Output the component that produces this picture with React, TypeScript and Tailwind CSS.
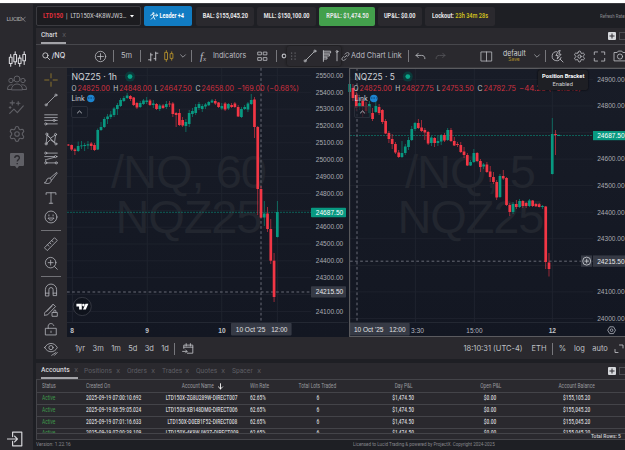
import type { ReactNode } from "react";
import clsx from "clsx";
import { Settings } from "lucide-react";

type Candle = [open: number, close: number, high: number, low: number];

// open / close / high / low, as y positions on the pane. close above open (smaller y) is an up bar
const hourly: Candle[] = [
  [144.6, 145.4, 144, 146], [144.6, 145.4, 144, 146], [145, 149.5, 144.5, 151], [149.5, 151, 148, 155],
  [151, 146, 141.5, 152], [146.3, 145.5, 141, 149], [146, 145, 143, 151], [145.5, 144.3, 141, 149],
  [143.5, 146, 142, 150], [145, 150, 143, 151], [149.5, 130, 128.5, 150], [130, 127, 122, 131],
  [127, 119, 117, 128], [119, 116.5, 114, 124], [117, 114.5, 111, 119], [115, 108.5, 107, 117],
  [109, 105, 103, 115], [106, 100, 98, 107], [101, 98, 96, 102], [98, 95.5, 93, 99],
  [96, 99, 95, 101], [97.5, 105, 97, 106], [103, 107.5, 102, 109], [107, 103, 101, 108],
  [104, 100.5, 99, 105], [102, 100.5, 97, 104], [100.5, 105, 99, 106], [105, 103.5, 100, 108],
  [104, 109, 103, 110], [109, 105.5, 104, 111], [105.5, 108, 104, 109], [107, 104, 101, 109],
  [103.6, 104.4, 101, 107], [103.5, 114, 102, 117], [113, 115, 112, 127], [113, 125, 109, 126],
  [120, 125.5, 117, 127], [126, 122, 119, 132], [124, 113, 110, 127], [114, 111, 108, 117],
  [113, 107, 104, 115], [108, 104, 102, 110], [109, 106, 104, 112], [106.5, 104.5, 103, 109],
  [105.3, 102, 101, 106], [102.5, 100.5, 99, 103], [101, 103.5, 99, 105], [102.5, 107, 102, 108],
  [108.5, 106, 103, 110], [103.5, 109.5, 102, 111], [108.5, 104, 103, 110], [105, 107, 103, 108],
  [103.5, 107, 102, 108], [107, 116.5, 105, 117], [117, 109, 107, 118], [109, 107, 105, 110],
  [109.5, 103.5, 102, 112], [104, 100, 94, 105], [99.5, 127, 97, 138], [127, 189, 126, 215],
  [189, 217.5, 186, 218], [217.5, 213.5, 201, 226], [213.5, 229, 207, 232], [229, 260.7, 219, 264],
  [260.7, 297, 253, 302], [237, 212, 201, 237.5],
];

const fiveMin: Candle[] = [
  [92, 84, 77, 96], [88, 98, 84, 101], [95, 108, 92, 111], [106, 103, 98, 110], [101, 107, 99, 117],
  [106, 111, 102, 114], [113, 104, 101, 117], [113, 119, 108, 121], [112, 106, 101, 113], [107, 113, 104, 115],
  [110, 122, 109, 124], [121, 133.5, 119, 134], [133, 139, 131, 143], [139, 144, 134, 149], [144, 152.5, 142, 154],
  [152.5, 157, 150, 158], [157, 153, 141, 158], [153, 146.5, 144, 155], [147, 140, 137, 150],
  [140, 129, 126, 141], [129, 123, 122, 131], [123, 128, 119, 129], [127.5, 131, 120, 132], [130, 132.5, 128, 140],
  [132, 143.5, 131, 145], [143, 137.5, 136, 146], [138, 143, 137, 147], [143, 141, 136, 146], [141.5, 135, 134, 145],
  [135, 140.5, 133, 142], [140, 130, 128, 141], [130, 141, 128, 142], [141, 145.5, 137, 146],
  [144, 145, 142, 147], [145, 152, 142, 153], [151.5, 155, 147, 158], [155, 165.5, 153, 166], [165.5, 162, 160, 166],
  [162, 153, 149, 163], [153, 161, 152, 162], [161, 167, 159, 172], [166.5, 164.5, 163, 169], [164.5, 172, 162, 173],
  [171.5, 177, 166, 182], [177, 182, 172, 184], [182, 197.5, 180, 200], [197, 176, 174, 198], [176, 178.5, 170, 180],
  [178, 205, 177, 206], [205, 212, 203, 216], [212, 204, 202, 214], [204, 207, 200, 209], [207, 201, 199, 208],
  [201, 206, 200, 208], [203, 206, 202, 208], [206, 200.5, 199, 207], [200.5, 206, 200, 207], [204, 206.3, 203, 207],
  [204.2, 207, 203, 207.5], [207, 206, 205, 209], [206.5, 262, 206, 269], [262.5, 269, 253, 276.5],
  [174, 134, 118, 174.5], [134, 135, 130, 155],
];

const UP = "#089981";
const DOWN = "#f23645";

function Candles({ data, x0, step }: { data: Candle[]; x0: number; step: number }) {
  return (
    <g>
      {data.map(([open, close, high, low], i) => {
        const x = x0 + i * step;
        const color = close < open ? UP : DOWN;
        return (
          <g key={i}>
            <rect x={x - 0.4} y={high} width={0.8} height={low - high} fill={color} opacity={0.75} />
            <rect x={x - 1.35} y={Math.min(open, close)} width={2.7} height={Math.max(0.8, Math.abs(close - open))} fill={color} />
          </g>
        );
      })}
    </g>
  );
}

type LabelProps = { x: number; y: number; w?: number; size?: number; fill?: string; weight?: number; children: ReactNode };

function Label({ x, y, w, size = 6.6, fill = "#a9abb1", weight = 400, children }: LabelProps) {
  return (
    <text x={x} y={y} textLength={w} lengthAdjust="spacingAndGlyphs" fontSize={size} fill={fill} fontWeight={weight}>
      {children}
    </text>
  );
}

const legendFont = "font-[Inter,sans-serif]";

function Ohlc({ x, values, change }: { x: number; values: string[]; change: string }) {
  const starts = [0, 41.7, 83.3, 124];
  return (
    <g className={legendFont}>
      {["O", "H", "L", "C"].map((k, i) => (
        <g key={k}>
          <Label x={x + starts[i]} y={90.7} w={k === "L" ? 3.6 : 5} size={7} fill="#c5c7cc">{k}</Label>
          <Label x={x + starts[i] + (k === "L" ? 4.6 : 6)} y={90.7} w={32.5} size={7.2} fill="#d0303f">{values[i]}</Label>
        </g>
      ))}
      <Label x={x + 165.5} y={90.7} w={62} size={7.2} fill="#d0303f">{change}</Label>
    </g>
  );
}

function Legend({ x, symbol, w }: { x: number; symbol: string; w: number }) {
  return (
    <g className={legendFont}>
      <Label x={x} y={79.9} w={w} size={8.8} fill="#d1d3d8">{symbol}</Label>
      <circle cx={x + w + 13} cy={76.6} r={5} fill="#0b3a3a" />
      <circle cx={x + w + 13} cy={76.6} r={2.4} fill="#0aa588" />
      <Label x={x} y={101.4} w={13.3} size={7.2} fill="#d1d3d8">Link</Label>
      <circle cx={x + 19.3} cy={98.5} r={3.8} fill="#1c84cf" />
      <path d={`M${x + 16.3} 98h6`} stroke="#0f3e70" strokeWidth={1.2} strokeDasharray="1.6 1" />
      <rect x={x} y={106.5} width={16} height={11} rx={1.5} fill="#171b26" fillOpacity={0.7} stroke="#2e323d" strokeWidth={0.8} />
      <path d={`M${x + 5.7} 113.2l2.3-2.2 2.3 2.2`} fill="none" stroke="#c9cbd0" strokeWidth={0.9} />
    </g>
  );
}

function TimeBadge({ x, w }: { x: number; w: number }) {
  return (
    <g>
      <rect x={x} y={323} width={w} height={12.4} rx={0.8} fill="#363a45" />
      <Label x={x + w - 55.8} y={332.3} w={29.5} fill="#e0e1e4">10 Oct '25</Label>
      <Label x={x + w - 20.4} y={332.3} w={16.2} fill="#e0e1e4">12:00</Label>
    </g>
  );
}

const paneFont = "font-['Liberation_Sans',Arial,sans-serif]";

function HourlyChart() {
  const ticks = Array.from({ length: 15 }, (_, i) => 25500 - i * 100);
  return (
    <svg viewBox="67 68 281 269" className={clsx("block h-[269px] w-[281px] shrink-0", paneFont)}>
      <defs>
        <linearGradient id="pane" x1="0" y1="0" x2="0" y2="1">
          <stop offset="0" stopColor="#181c27" />
          <stop offset="1" stopColor="#131722" />
        </linearGradient>
      </defs>
      <rect x={67} y={68} width={281} height={269} fill="url(#pane)" />
      {[72.3, 147.2, 221.8, 277.3].map((x) => (
        <rect key={x} x={x - 0.4} y={68} width={0.8} height={254} fill="#222631" />
      ))}
      {ticks.map((t, i) => (
        <rect key={t} x={67} y={75 + i * 16.86} width={244} height={0.8} fill="#20242f" />
      ))}
      <rect x={67} y={322} width={281} height={0.8} fill="#292d38" />
      <text x={111} y={187.6} fontSize={47} textLength={156} fill="#22262f">/NQ, 60</text>
      <text x={115.5} y={232.5} fontSize={47} textLength={147} fill="#22262f">NQZ25</text>
      <path d="M67 212.3H311" stroke="#0a7d6d" strokeWidth={0.7} strokeDasharray="2 1" />
      <path d="M261 68V322M67 292H311" fill="none" stroke="#686b76" strokeWidth={1} strokeDasharray="2.7 2.4" />
      <Candles data={hourly} x0={65.1} step={3.265} />
      {ticks.filter((t) => t !== 24700 && t !== 24200).map((t) => (
        <Label key={t} x={315.8} y={77.7 + ((25500 - t) / 100) * 16.86} w={27.4}>{`${t}.00`}</Label>
      ))}
      <rect x={311} y={207.7} width={35} height={9.6} rx={0.8} fill={UP} />
      <Label x={315.8} y={214.8} w={27.4} fill="#ffffff">24687.50</Label>
      <rect x={311} y={286.2} width={35} height={11.4} rx={0.8} fill="#363a45" />
      <Label x={315.8} y={294.3} w={27.4} fill="#e8e9ec">24215.50</Label>
      <Legend x={71.5} symbol="NQZ25 · 1h" w={45.5} />
      <Ohlc x={71.5} values={["24825.00", "24848.00", "24647.50", "24658.00"]} change="−169.00 (−0.68%)" />
      <Label x={70.2} y={332.8} fill="#c0c2c8" weight={700}>8</Label>
      <Label x={145.2} y={332.8} fill="#c0c2c8" weight={700}>9</Label>
      <Label x={218.3} y={332.8} fill="#c0c2c8" weight={700}>10</Label>
      <TimeBadge x={231} w={60.6} />
      {/* vendor mark */}
      <circle cx={82.2} cy={306.5} r={9.1} fill="#0f131c" stroke="#3c3f49" strokeWidth={0.8} />
      <path d="M76.4 303.8h5.4v5.8h-2.7v-3.1h-2.7zM85.5 303.8h2.9l-2.6 5.8h-2.8z" fill="#fff" />
      <circle cx={83.4} cy={305.1} r={1.3} fill="#fff" />
    </svg>
  );
}

function FiveMinChart() {
  const ticks = Array.from({ length: 10 }, (_, i) => 24900 - i * 100);
  return (
    <svg viewBox="348 68 277 269" className={clsx("block h-[269px] w-[277px] shrink-0", paneFont)}>
      <rect x={348} y={68} width={277} height={269} fill="url(#pane)" />
      {[415.3, 474.3, 552.3].map((x) => (
        <rect key={x} x={x - 0.4} y={68} width={0.8} height={254} fill="#222631" />
      ))}
      {ticks.map((t, i) => (
        <rect key={t} x={350} y={79 + i * 26.56} width={243} height={0.8} fill="#20242f" />
      ))}
      <rect x={350} y={322} width={275} height={0.8} fill="#292d38" />
      <text x={405} y={187.6} fontSize={47} textLength={131} fill="#22262f">/NQ, 5</text>
      <text x={397.5} y={232.5} fontSize={47} textLength={147} fill="#22262f">NQZ25</text>
      <path d="M350 135.5H593" stroke="#0a7d6d" strokeWidth={0.7} strokeDasharray="2 1" />
      <path d="M357 68V322M350 261.2H593" fill="none" stroke="#686b76" strokeWidth={1} strokeDasharray="2.7 2.4" />
      <Candles data={fiveMin} x0={349.7} step={3.267} />
      <path d="M557 135.4h3" stroke={UP} strokeWidth={1.2} />
      {ticks.filter((t) => t !== 24700 && t !== 24200).map((t) => (
        <Label key={t} x={597.2} y={81.8 + ((24900 - t) / 100) * 26.56} w={27.4}>{`${t}.00`}</Label>
      ))}
      <rect x={593} y={131} width={32} height={9.2} fill={UP} />
      <Label x={597.2} y={138} w={27.4} fill="#ffffff">24687.50</Label>
      <rect x={581} y={255.4} width={11} height={11.4} fill="#363a45" />
      <rect x={593} y={255.4} width={32} height={11.4} fill="#363a45" />
      <circle cx={586.7} cy={261.1} r={4} fill="none" stroke="#d1d3d8" strokeWidth={0.8} />
      <path d="M584.5 261.1h4.4M586.7 258.9v4.4" stroke="#d1d3d8" strokeWidth={0.8} />
      <Label x={597.2} y={263.5} w={27.4} fill="#e8e9ec">24215.50</Label>
      <Legend x={354.5} symbol="NQZ25 · 5" w={40.3} />
      <Ohlc x={353.5} values={["24825.00", "24827.75", "24753.50", "24782.75"]} change="−44.25 (−0.18%)" />
      <Label x={411} y={332.8} w={13} fill="#b2b5be">3:30</Label>
      <TimeBadge x={349.5} w={60.2} />
      <Label x={466.3} y={332.8} w={16.2} fill="#b2b5be">15:00</Label>
      <Label x={548.7} y={332.8} fill="#c0c2c8" weight={700}>12</Label>
      <path d="M609.7 326.8h3.8l2 3.4-2 3.4h-3.8l-2-3.4z" fill="none" stroke="#b2b5be" strokeWidth={0.8} />
      <circle cx={611.6} cy={330.2} r={1.3} fill="none" stroke="#b2b5be" strokeWidth={0.8} />
      {/* active pane frame */}
      <path d="M625 68.4H349.6V336.5H625" fill="none" stroke="#5b5b5f" strokeWidth={1.1} />
    </svg>
  );
}

type IconProps = { children: ReactNode; className?: string; width?: number };

// Stroke icon on a 20x20 grid
function Icon({ children, className = "size-[14px] text-[#b9bac0]", width = 1.2 }: IconProps) {
  return (
    <svg viewBox="0 0 20 20" fill="none" stroke="currentColor" strokeWidth={width} strokeLinecap="round" strokeLinejoin="round" className={clsx("shrink-0", className)}>
      {children}
    </svg>
  );
}

function Slot({ className, children }: { className: string; children?: ReactNode }) {
  return <div className={clsx("flex h-full shrink-0 items-center justify-center whitespace-nowrap", className)}>{children}</div>;
}

const Rule = () => <div className="h-[12px] w-px shrink-0 bg-[#77777c]" />;

const Chevron = () => (
  <Icon className="size-[8px] text-[#a5a6ab]" width={2}><path d="M4 7l6 6 6-6" /></Icon>
);

function Sidebar() {
  return (
    <aside className="flex w-[33px] shrink-0 flex-col items-center bg-[#2a292e] text-[#606066]">
      <div className="mt-[9px] flex h-[12px] items-center text-[6px] leading-none tracking-tighter text-[#b3b3b8]">
        LUCID
        <svg viewBox="0 0 8 8" className="-ml-px h-[8px] w-[6px]" fill="none" stroke="currentColor" strokeWidth="0.8"><path d="M1 1l6 6.5M7.5 1L2 6.5" /></svg>
      </div>
      <Icon className="mt-[25px] h-[18px] w-[18px] text-[#d8d8dc]" width={1.2}>
        <path d="M3 5v3M3 15v3M1.5 8h3v7h-3zM8 2v3M8 13v3M6.5 5h3v8h-3zM13 6v3M13 15v3M11.5 9h3v6h-3zM18 2v3M18 12v4M16.5 5h3v7h-3z" />
      </Icon>
      <Icon className="mt-[5px] size-[20px]" width={1}>
        <circle cx="10" cy="6" r="3" /><circle cx="4" cy="7.5" r="2.2" /><circle cx="16" cy="7.5" r="2.2" />
        <path d="M4.5 16.5c0-7.5 11-7.5 11 0zM4.5 16.5h-4c0-3.5 1.5-5 4.8-4.7M15.5 16.5h4c0-3.5-1.5-5-4.8-4.7" />
      </Icon>
      <Icon className="mt-[6px] size-[17px]" width={1.3}>
        <path d="M2 17l5-5 4 4 7-8M5 2v5M2.5 4.5h5M12 3v4M10 5h4M2.5 9v2M1.5 10h2" />
      </Icon>
      <Settings className="mt-[9px] size-[18px]" strokeWidth={1.5} />
      <svg viewBox="0 0 14 16" className="mt-[10px] h-[16px] w-[14px]">
        <path d="M1 0h12a1 1 0 0 1 1 1v11a1 1 0 0 1-1 1H9l-2 2.5L5 13H1a1 1 0 0 1-1-1V1a1 1 0 0 1 1-1z" fill="#606066" />
        <path d="M4.8 5c0-3 4.6-3 4.6 0 0 1.7-2.2 1.6-2.2 3.5M7.2 10v1.2" fill="none" stroke="#2a292e" strokeWidth="1.3" />
      </svg>
      <Icon className="mt-auto mb-[3px] ml-[-3px] size-[16px] text-[#d5d5d9]" width={1.5}>
        <path d="M7 7V1.5h11.5v17H7V13M.5 10H13M9.5 6.5L13 10l-3.5 3.5" />
      </Icon>
    </aside>
  );
}

function Stat({ className, children }: { className: string; children: ReactNode }) {
  return (
    <div className={clsx("flex h-[19px] shrink-0 items-center justify-center rounded-[2px] text-[7px] font-bold whitespace-nowrap text-[#e6e6e8]", className)}>
      <span className="scale-x-[.8]">{children}</span>
    </div>
  );
}

function TopBar() {
  return (
    <header className="flex h-[24px] shrink-0 items-center bg-[#1e1f24]">
      <div className="mr-[3px] flex h-[20px] w-[105px] shrink-0 items-center rounded-[2px] border border-[#3b3b40] bg-[#1c1c20] pl-[6px] text-[7px] whitespace-nowrap text-[#d2d2d5]">
        <span className="w-[86px] origin-left scale-x-[.84]"><b className="text-[#e02f3c]">LTD150</b>&nbsp; | &nbsp;LTD150X-4K8WJW3…</span>
        <svg viewBox="0 0 4 3" className="ml-px h-[3px] w-[4px] fill-white"><path d="M0 0h4L2 2.5z" /></svg>
      </div>
      <div className="mr-[4px] flex h-[20px] w-[48px] shrink-0 items-center rounded-[2px] bg-[#117cc3] pl-[6px] text-[7px] font-bold text-white">
        <Icon className="size-[8px]" width={2.2}>
          <circle cx="8" cy="3" r="1.5" /><path d="M2 8l5-2 3 4-3 4-4 4M9 12l3 6M10 8h9M16 5l3 3-3 3" />
        </Icon>
        <span className="origin-left scale-x-[.78] pl-[2px] whitespace-nowrap">Leader +4</span>
      </div>
      <Stat className="mr-[3px] w-[58px] bg-[#2a292e]">BAL: $155,045.20</Stat>
      <Stat className="mr-[3px] w-[59px] bg-[#2a292e]">MLL: $150,100.00</Stat>
      <Stat className="mr-[3px] w-[56px] bg-[#43a04c]">RP&amp;L: $1,474.50</Stat>
      <Stat className="mr-[3px] w-[44px] bg-[#2a292e]">UP&amp;L: $0.00</Stat>
      <Stat className="w-[70px] bg-[#2a292e]">Lockout: <span className="font-medium text-[#d9c81c]">23h 34m 28s</span></Stat>
      <span className="ml-auto w-[25px] origin-left scale-x-[.86] text-[5px] whitespace-nowrap text-[#8b8b90]">Refresh Rate:</span>
    </header>
  );
}

function PanelButtons() {
  return (
    <div className="ml-auto flex shrink-0 gap-[3px]">
      <div className="flex size-[8px] items-center justify-center rounded-[1px] bg-[#d6d8dc]">
        <svg viewBox="0 0 6 6" className="size-[6px]" stroke="#2a292e"><path d="M3 .5v5M.5 3h5" /></svg>
      </div>
      <div className="h-[8px] w-[6px] border border-r-0 border-[#4d4d52]" />
    </div>
  );
}

function ChartToolbar() {
  return (
    <div className="flex h-[23px] shrink-0 items-center overflow-hidden border-t border-[#47474c] bg-[#2a292e] font-[Inter,sans-serif] text-[7.5px] text-[#bcbdc2]">
      <Slot className="w-[31px] gap-[2px] pl-[4px] text-[7.2px] text-[#dedfe2]">
        <Icon className="size-[8px]" width={2}><circle cx="8.5" cy="8.5" r="6.5" /><path d="M13.5 13.5L19 19" /></Icon>
        <span className="font-medium">/NQ</span>
      </Slot>
      <Slot className="ml-[26px] w-[14px]">
        <Icon className="size-[13px]"><circle cx="10" cy="10" r="8" /><path d="M10 5.5v9M5.5 10h9" /></Icon>
      </Slot>
      <Slot className="w-[12px]"><Rule /></Slot>
      <Slot className="w-[15px]">5m</Slot>
      <Slot className="w-[12px]"><Rule /></Slot>
      <Slot className="w-[14px]">
        <Icon className="size-[11px]" width={1.7}><path d="M5 4v14M5 16H1M5 7h3M14 2v15M14 14h-3M14 4h4" /></Icon>
      </Slot>
      <Slot className="w-[18px]">
        <Icon className="size-[12px] text-[#a8882c]" width={1.6}><path d="M3.5 4h4v12h-4zM5.5 1v3M5.5 16v3M12.5 6h4v8h-4zM14.5 3v3M14.5 14v3" /></Icon>
      </Slot>
      <Slot className="w-[10px]"><Chevron /></Slot>
      <Slot className="w-[6px]"><Rule /></Slot>
      <Slot className="w-[18px]"><span className="font-['Liberation_Serif',serif] text-[11px] italic">f<sub className="text-[7px]">x</sub></span></Slot>
      <Slot className="w-[36px]"><span className="scale-x-[.95]">Indicators</span></Slot>
      <Slot className="w-[28px]">
        <Icon className="size-[11px]" width={1.5}><path d="M2 2h6v5H2zM12 2h6v5h-6zM2 12h6v5H2zM12 12h6v5h-6z" /></Icon>
      </Slot>
      <Slot className="-ml-[4px] w-[8px]"><Rule /></Slot>
      <Slot className="w-[7px]"><Icon className="size-[6px]" width={4}><circle cx="10" cy="10" r="6" /></Icon></Slot>
      <div className="flex h-[20px] w-[54px] shrink-0 items-center rounded-[2px] bg-[#2a292e] shadow-[0_0_3px_#111]">
        <Slot className="w-[12px]">
          <svg viewBox="0 0 5 8" className="h-[8px] w-[5px] fill-[#67676c]">
            {[0.5, 3.5, 6.5].map((y) => <g key={y}><rect x="0" y={y} width="1.2" height="1.2" /><rect x="3.5" y={y} width="1.2" height="1.2" /></g>)}
          </svg>
        </Slot>
        <Slot className="w-[21px]"><Icon className="size-[14px]"><path d="M4 16L16 4" /><circle cx="3" cy="17" r="1.5" /><circle cx="17" cy="3" r="1.5" /></Icon></Slot>
        <Slot className="w-[13px]"><Icon className="size-[12px]" width={1.5}><path d="M4 1v18M4 2h12v3H4M4 7h10v3H4M4 12h6v3H4" /></Icon></Slot>
        <Slot className="w-[8px]"><Icon className="size-[12px]" width={1.5}><path d="M10 4v14" /><circle cx="10" cy="2.5" r="1.5" /></Icon></Slot>
      </div>
      <Slot className="-ml-px w-[10px]">
        <Icon className="size-[9px]" width={1.7}><path d="M8 12L13 7M9 5l3-3a3.5 3.5 0 0 1 5 5l-3 3M11 15l-3 3a3.5 3.5 0 0 1-5-5l3-3" /></Icon>
      </Slot>
      <Slot className="ml-px w-[51px]"><span className="scale-x-[.96]">Add Chart Link</span></Slot>
      <Slot className="w-[12px]"><Rule /></Slot>
      <Slot className="w-[13px]"><Icon className="size-[11px]" width={1.5}><path d="M6 4L2 8l4 4M2 8h10c4 0 6 2 6 6" /></Icon></Slot>
      <Slot className="ml-[7px] w-[13px]"><Icon className="size-[11px] text-[#56565b]" width={1.5}><path d="M14 4l4 4-4 4M18 8H8c-4 0-6 2-6 6" /></Icon></Slot>
      <Slot className="ml-[32px] w-[14px]"><Icon className="size-[13px]"><path d="M2 3h16v14H2zM10 3v14" /></Icon></Slot>
      <div className="ml-[7px] flex w-[28px] shrink-0 flex-col items-center leading-none">
        <span className="scale-x-[.92] text-[7.5px] text-[#cfd0d4]">default</span>
        <span className="text-[5px] text-[#b08f2c]">Save</span>
      </div>
      <Slot className="ml-[4px] w-[10px]"><Chevron /></Slot>
      <Slot className="w-[7px]"><Rule /></Slot>
      <Slot className="w-[17px]">
        <Icon className="size-[13px]" width={1.3}><path d="M9 2.5a7 7 0 1 0 6.5 9M14 14l4.5 4.5M12 1L7.500 8.500h3.500L9.500 14l6-7.500H12L14 1z" /></Icon>
      </Slot>
      <Slot className="w-[26px]"><Settings className="size-[13px] text-[#b9bac0]" strokeWidth={1.7} /></Slot>
      <Slot className="w-[15px]"><Icon className="size-[13px]" width={1.3}><path d="M2 7V3h5M13 3h5v4M18 13v4h-5M7 17H2v-4" /></Icon></Slot>
      <Slot className="ml-[5px] w-[15px]"><Icon className="size-[14px]"><path d="M2 5h4l1.5-2h5L14 5h4v12H2z" /><circle cx="10" cy="10.8" r="3.7" /></Icon></Slot>
    </div>
  );
}

const drawTools: ReactNode[] = [
  <g key="cross" stroke="#a8882c"><path d="M10 1v6M10 13v6M1 10h6M13 10h6" /></g>,
  <g key="trend"><path d="M4 16L16 4" /><circle cx="3" cy="17" r="1.5" /><circle cx="17" cy="3" r="1.5" /></g>,
  <g key="lines"><path d="M1 4h18M1 8h18M1 12h12M16 12h3M4 17h15" /><circle cx="14.5" cy="12" r="1.5" /><circle cx="2.5" cy="17" r="1.5" /></g>,
  <g key="xabcd"><path d="M3 16L4.5 4 15 15 16.5 4.5M5 5l4 4 6-4M4 16l5-5 7 5" /><circle cx="3" cy="17" r="1.5" /><circle cx="4" cy="3" r="1.5" /><circle cx="16.5" cy="3.5" r="1.5" /><circle cx="17" cy="17" r="1.5" /></g>,
  <g key="forecast"><path d="M4 3h15M1 8h14M18 8h1M4 12l11-3M4 17h12M2.5 12v3" /><circle cx="2.5" cy="3" r="1.5" /><circle cx="16.5" cy="8" r="1.5" /><circle cx="2.5" cy="17" r="1.5" /><circle cx="17.5" cy="17" r="1.5" /></g>,
  <g key="brush"><path d="M1 17c4-1 1-6 6-7 3 0 4 3 3 5-2 4-7 3-9 2zM9 10l9-8M11 13l8-10" /></g>,
  <g key="text"><path d="M3 5V2.5h14V5M10 2.5v15M7.5 17.5h5" /></g>,
  <g key="smile"><circle cx="10" cy="10" r="8.5" /><path d="M7 7v1.5M13 7v1.5M6 12c2 3.5 6 3.5 8 0z" /></g>,
];

const measureTools: ReactNode[] = [
  <g key="ruler"><path d="M1 15L15 1l4 4L5 19zM5 11l2 2M8 8l2 2M11 5l2 2" /></g>,
  <g key="zoom"><circle cx="9.5" cy="9.5" r="7.5" /><path d="M15 15l4 4M9.5 6v7M6 9.5h7" /></g>,
];

const lockTools: ReactNode[] = [
  <g key="magnet"><path d="M2 18V9.5a8 8 0 0 1 16 0V18h-5V9.5a3 3 0 0 0-6 0V18zM2 14.5h5M13 14.5h5" /></g>,
  <g key="draw"><path d="M1 14L13 1.500l3.500 3.500L5 17l-4.500.5zM4 12l8-8M12 13.500h7v5.500h-7zM14 13.500v-2c0-2 3-2 3 0v2" /></g>,
  <g key="lock"><path d="M2.5 9h15v9.500h-15zM6 9V6c0-5 7-5 8-1M10 13v2" /></g>,
  <g key="eye"><path d="M1 8c4-8 14-8 18 0-4 8-14 8-18 0zM11 19l6-4M15 19l4-4" /><circle cx="10" cy="8" r="3" /></g>,
];

function ToolGroup({ icons, className }: { icons: ReactNode[]; className: string }) {
  return (
    <div className={clsx("flex flex-col items-center", className)}>
      {icons.map((icon, i) => <Icon key={i} width={1.1}>{icon}</Icon>)}
    </div>
  );
}

function DrawingTools() {
  return (
    <div className="flex w-[31px] shrink-0 flex-col items-center bg-[#2a292e] pt-[5px] pr-[2px]">
      <ToolGroup icons={drawTools} className="gap-[5.6px]" />
      <div className="mt-[6px] h-px w-[20px] shrink-0 bg-[#717176]" />
      <ToolGroup icons={measureTools} className="mt-[6px] gap-[5px]" />
      <div className="mt-[6px] h-px w-[20px] shrink-0 bg-[#717176]" />
      <ToolGroup icons={lockTools} className="mt-[6px] gap-[5.6px]" />
    </div>
  );
}

function RangeBar() {
  return (
    <div className="flex h-[22px] items-center overflow-hidden bg-[#2a292e] pt-px font-[Inter,sans-serif] text-[7.5px] text-[#bfc0c5]">
      <div className="ml-[8px] flex w-[94px] justify-between">
        {["1yr", "3m", "1m", "5d", "3d", "1d"].map((r) => <span key={r}>{r}</span>)}
      </div>
      <Slot className="ml-[3px] w-[5px]"><Rule /></Slot>
      <Slot className="ml-[3px] w-[15px]"><Icon className="size-[12px]" width={1.4}><path d="M3 9V3.5h15V17H9M3 7h15M7 1v4M14 1v4M1 14h7M6 11.5L8.500 14 6 16.5" /></Icon></Slot>
      <Slot className="ml-auto w-[64px]">18:10:31 (UTC-4)</Slot>
      <Slot className="ml-[5px] w-[18px]">ETH</Slot>
      <Slot className="ml-px w-[7px]"><Rule /></Slot>
      <Slot className="ml-px w-[11px]">%</Slot>
      <Slot className="ml-[4px] w-[15px]">log</Slot>
      <Slot className="ml-[4px] w-[18px]">auto</Slot>
      <Slot className="ml-[3px] w-[13px]"><Icon className="size-[10px]" width={1.7}><path d="M11 2h7v6M2 11v6h6" /></Icon></Slot>
    </div>
  );
}

const rows = [
  ["Active", "2025-09-19 07:00:10.692", "LTD150X-ZG8U289W-DIRECT007", "62.65%", "6", "$1,474.50", "$0.00", "$155,105.20"],
  ["Active", "2025-09-19 06:59:05.024", "LTD150X-XB148DM0-DIRECT006", "62.65%", "6", "$1,474.50", "$0.00", "$155,045.20"],
  ["Active", "2025-09-19 07:01:16.633", "LTD150X-D0EB1F52-DIRECT008", "62.65%", "6", "$1,474.50", "$0.00", "$155,045.20"],
  ["Active", "2025-09-19 07:00:38.109", "LTD150X-4K8WJW3Z-DIRECT009", "62.65%", "6", "$1,474.50", "$0.00", "$155,045.20"],
];

const headers = ["Status", "Created On", "Account Name", "Win Rate", "Total Lots Traded", "Day P&L", "Open P&L", "Account Balance"];

const gridRow = "grid h-[12px] shrink-0 grid-cols-[48px_74px_86px_30px_85px_87px_87px_86px] items-center border-t border-[#444449] text-[6.3px] whitespace-nowrap";

function Cell({ col, children }: { col: number; children: ReactNode }) {
  const left = col < 2 || col === 3;
  const sorted = children === "Account Name";
  return (
    <div className={clsx("flex w-full items-center", left ? "justify-start" : "justify-center", (col === 0 || col === 3) && "pl-[5px]", col === 1 && "pl-px", sorted && "pr-[3px]")}>
      <span className={clsx("scale-x-[.77]", left && "origin-left")}>{children}</span>
      {sorted && <Icon className="-ml-[2px] size-[7px] text-white" width={2.5}><path d="M10 2v15M4 11l6 6 6-6" /></Icon>}
    </div>
  );
}

function AccountsPanel() {
  const tabs = [
    { name: "Positions", width: "w-[36px]" },
    { name: "Orders", width: "w-[28px]" },
    { name: "Trades", width: "w-[27px]" },
    { name: "Quotes", width: "w-[29px]" },
    { name: "Spacer", width: "w-[29px]" },
  ];
  return (
    <section className="flex h-[77px] shrink-0 flex-col bg-[#2a292e]">
      <div className="flex h-[16px] shrink-0 items-stretch text-[7.2px] text-[#5d5d63]">
        <div className="ml-[5px] flex w-[37px] items-center justify-between border-b-2 border-[#a3a3a8] font-medium text-[#d5d5d9]">
          <span className="origin-left scale-x-[.94]">Accounts</span>
          <span className="text-[6px] font-normal text-[#5d5d63]">X</span>
        </div>
        <div className="ml-[6px] flex items-center gap-[7px]">
          {tabs.map((t) => (
            <div key={t.name} className={clsx("flex items-center justify-between", t.width)}>
              <span className="origin-left scale-x-[.93]">{t.name}</span>
              <span className="text-[6px]">X</span>
            </div>
          ))}
        </div>
        <div className="ml-auto flex items-center"><PanelButtons /></div>
      </div>
      <div className="flex h-[54px] flex-col overflow-hidden border-l border-[#444449]">
        <div className={clsx(gridRow, "h-[13px]! text-[#99999e]")}>
          {headers.map((h, i) => <Cell key={h} col={i}>{h}</Cell>)}
        </div>
        {rows.map((row) => (
          <div key={row[2]} className={clsx(gridRow, "font-medium text-[#d3d3d6] last:pb-[2px]")}>
            {row.map((v, i) => (
              <Cell key={i} col={i}>{i === 0 ? <span className="font-normal text-[#3f9a4c]">{v}</span> : v}</Cell>
            ))}
          </div>
        ))}
      </div>
      <div className="flex h-[7px] items-center justify-end border-y border-l border-[#444449] bg-[#2a292e] pr-[4px] text-[5.8px] leading-none font-medium text-[#d3d3d6]">
        <span className="origin-right scale-x-[.86]">Total Rows: 5</span>
      </div>
    </section>
  );
}

export default function App() {
  return (
    <div className="flex h-[450px] w-[625px] flex-col overflow-hidden bg-[#1e1f24] font-[Roboto,sans-serif] leading-none">
      <div className="h-[4px] shrink-0 border-b border-[#3a3a3e] bg-white" />
      <div className="flex min-h-0 flex-1">
        <Sidebar />
        <main className="ml-[3px] flex w-[589px] flex-col">
          <TopBar />
          <div className="flex h-[16px] shrink-0 items-stretch bg-[#2a292e] text-[7.2px]">
            <div className="ml-[5px] flex w-[25px] items-center justify-between border-b-2 border-[#a3a3a8] font-medium text-[#d5d5d9]">
              <span className="origin-left scale-x-[.92]">Chart</span>
              <span className="text-[6px] font-normal text-[#5d5d63]">X</span>
            </div>
            <div className="ml-auto flex items-center"><PanelButtons /></div>
          </div>
          <ChartToolbar />
          <div className="relative flex h-[292px] shrink-0 border-t border-[#38383c]">
            <DrawingTools />
            <div className="flex w-[558px] flex-col">
              <div className="flex">
                <HourlyChart />
                <FiveMinChart />
              </div>
              <RangeBar />
            </div>
            <div className="absolute top-[2px] left-[502px] flex h-[20px] w-[50px] flex-col items-center justify-center gap-[2.5px] rounded-[2px] bg-[#1e1f24] text-[6px] whitespace-nowrap text-[#d0d0d4] shadow-[0_0_2px_#000]">
              <b className="scale-x-[.95] text-white">Position Bracket</b>
              <span className="scale-x-[.95]">Enabled</span>
            </div>
          </div>
          <div className="h-[4px] shrink-0" />
          <AccountsPanel />
          <footer className="flex h-[9px] items-center text-[5.5px] whitespace-nowrap text-[#87878c]">
            <span className="w-[317px] origin-left scale-x-[.88]">Version: 1.22.16</span>
            <span className="origin-left scale-x-[.82]">Licensed to Lucid Trading &amp; powered by ProjectX. Copyright 2024-2025</span>
          </footer>
        </main>
      </div>
    </div>
  );
}
